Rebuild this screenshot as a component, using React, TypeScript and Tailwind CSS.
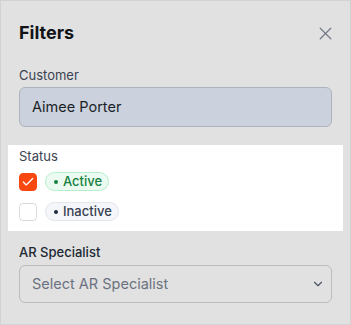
import { X, ChevronDown, Check } from 'lucide-react';

function StatusOption({ checked, label, tone }: { checked: boolean; label: string; tone: 'green' | 'gray' }) {
  const badge =
    tone === 'green'
      ? 'bg-[#ebfbf1] border-[#b5eecb] text-[#16803f]'
      : 'bg-[#f4f6f9] border-[#e2e5ea] text-[#374151]';
  const dot = tone === 'green' ? 'bg-[#16803f]' : 'bg-[#1e293b]';
  return (
    <div className="flex h-[19px] items-center gap-2">
      <span
        className={`flex h-[18px] w-[18px] items-center justify-center rounded-[4px] border ${
          checked ? 'border-[#f9480f] bg-[#f9480f]' : 'border-[#d7dbe0] bg-white'
        }`}
      >
        {checked && <Check className="h-3.5 w-3.5 text-white" strokeWidth={2.25} />}
      </span>
      <span className={`flex h-[19px] items-center gap-[5px] rounded-full border pr-1.5 pl-2 text-[13px] font-medium ${badge}`}>
        <span className={`h-[4px] w-[4px] rounded-full ${dot}`} />
        {label}
      </span>
    </div>
  );
}

export default function App() {
  return (
    <div
      className="flex h-[325px] w-[351px] flex-col border border-[#d2d2d2] bg-[#e1e1e1] px-[18px]"
      style={{ fontFamily: 'Inter, "Noto Sans", sans-serif' }}
    >
      <div className="mt-[18px] flex h-7 items-center justify-between">
        <h2 className="text-lg leading-7 font-bold text-[#111318]">Filters</h2>
        <X className="mr-[-4px] h-[21px] w-[21px] text-[#737a86]" strokeWidth={1.5} />
      </div>

      <label className="mt-[18px] text-[13px] leading-5 text-[#3b4350]">Customer</label>
      <div className="mt-[2px] flex h-[40px] items-center rounded-md border border-[#adb4bf] bg-[#cbd2de] px-3 text-[14.5px] text-[#1b1f27]">
        Aimee Porter
      </div>

      <div className="-mx-[11px] mt-[18px] flex flex-col bg-white px-[11px] pt-[1px] pb-[10px]">
        <span className="text-[13px] leading-5 text-[#3b4350]">Status</span>
        <div className="mt-[6px] flex flex-col gap-[11px]">
          <StatusOption checked label="Active" tone="green" />
          <StatusOption checked={false} label="Inactive" tone="gray" />
        </div>
      </div>

      <label className="mt-[11px] text-[13px] leading-5 font-medium text-[#202833]">AR Specialist</label>
      <div className="mt-[3px] flex h-[38px] items-center justify-between rounded-md border border-[#babcc0] pr-1.5 pl-3 text-[14.5px] text-[#6b7180]">
        <span>Select AR Specialist</span>
        <ChevronDown className="h-3.5 w-3.5 text-[#4b5563]" strokeWidth={2} />
      </div>
    </div>
  );
}
